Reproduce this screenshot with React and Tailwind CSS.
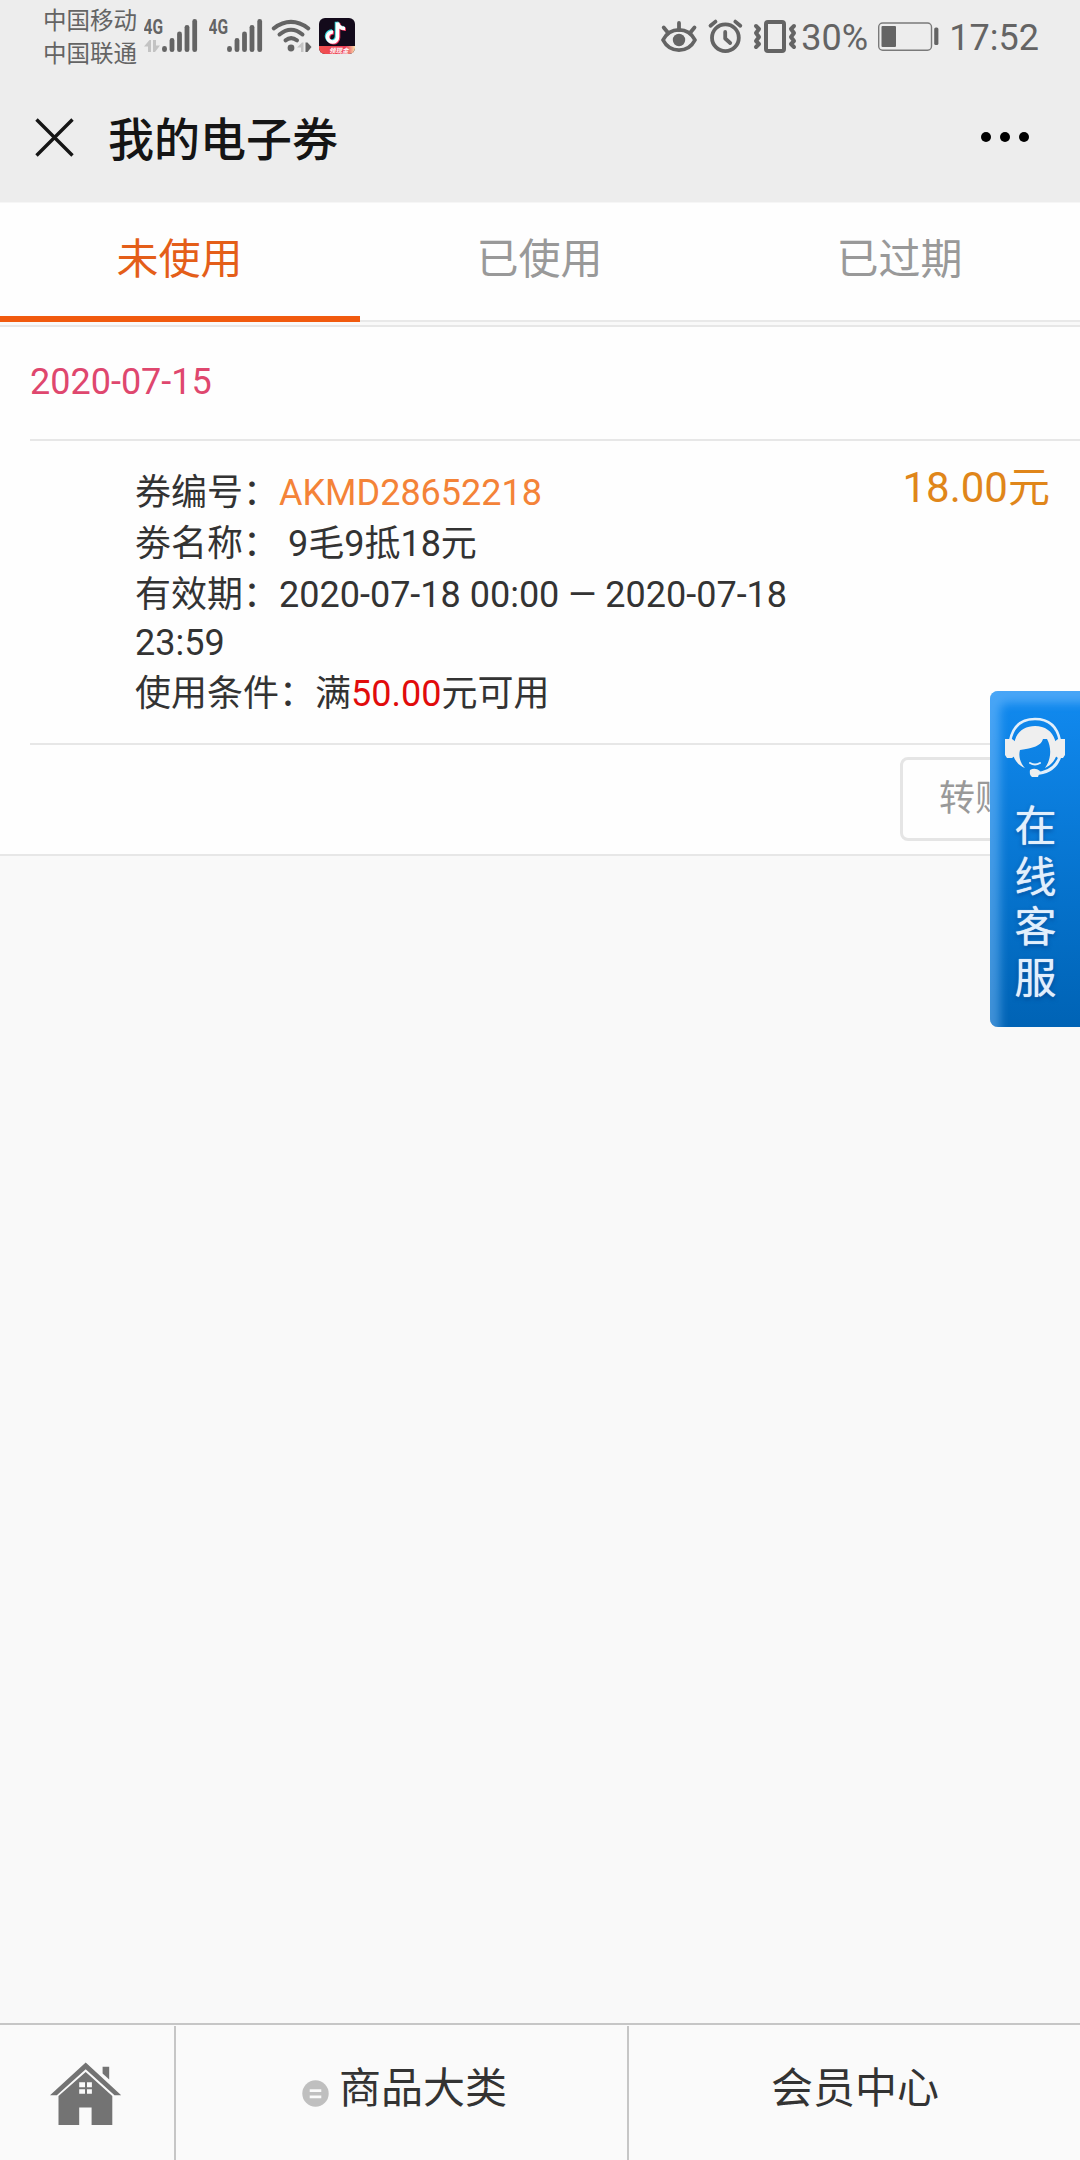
const SignalIcon = ({ arrows }) => {
  return (
    <svg className="h-[38px] w-[54px]" viewBox="144 16 54 38">
      <text x="143.5" y="34" fontSize="21" fontWeight="700" textLength="19.5" lengthAdjust="spacingAndGlyphs" fill="#646464">
        4G
      </text>
      {arrows && (
        <g fill="#c3c3c3">
          <path d="M144 46.5 L149.5 40 H151 V52 H148 V46.5 Z" />
          <path d="M160 45.5 L155 52 H153 V40 H156 V45.5 Z" />
        </g>
      )}
      <g stroke="#646464" strokeWidth="4.8" strokeLinecap="round">
        <path d="M164.5 48.3 V49.7" />
        <path d="M172 40.5 V49.7" />
        <path d="M179.5 34 V49.7" />
        <path d="M187 27.3 V49.7" />
        <path d="M194.7 21.5 V49.7" />
      </g>
    </svg>
  );
};

const WifiIcon = () => {
  return (
    <svg className="h-[38px] w-[41px]" viewBox="271 16 41 38">
      <g fill="none" stroke="#646464" strokeWidth="4" strokeLinecap="round">
        <path d="M273.8 28.3 Q291 15.5 308.2 28.3" />
        <path d="M279.5 34.5 Q291 25 302.5 34.5" />
        <path d="M285.5 40.3 Q291 36 297 40.3" />
      </g>
      <circle cx="291" cy="48" r="3.4" fill="#646464" />
      <path d="M297 47.5 L302 42.5 H303.5 V52 H301 V47.5 Z" fill="#c3c3c3" />
      <path d="M305.5 42.5 H307.5 L311.5 47 L307.5 52 H305.5 Z" fill="#646464" />
    </svg>
  );
};

const TiktokIcon = () => {
  const note = 'M17.5 5 V19.5 A5 5 0 1 1 13 14.5 M17.5 5 C18 9 21 11 25 11';
  return (
    <svg className="h-9 w-9" viewBox="0 0 36 36">
      <defs>
        <clipPath id="app-shape">
          <rect width="36" height="36" rx="6" />
        </clipPath>
        <linearGradient id="app-banner" x1="0" x2="1">
          <stop offset="0" stopColor="#f2524f" />
          <stop offset="0.75" stopColor="#ea3d57" />
          <stop offset="1" stopColor="#fbe3ae" />
        </linearGradient>
      </defs>
      <g clipPath="url(#app-shape)">
        <rect width="36" height="36" fill="#130a1b" />
        <g fill="none" strokeWidth="3.6" transform="translate(1 -.5)">
          <path d={note} stroke="#35d6dc" transform="translate(-1 -.8)" />
          <path d={note} stroke="#f0305a" transform="translate(1 .8)" />
          <path d={note} stroke="#fff" />
        </g>
        <rect y="28" width="36" height="8" fill="url(#app-banner)" />
        <text x="10" y="34.6" fontSize="6.5" fontWeight="700" fontStyle="italic" fill="#fff">
          领现金
        </text>
      </g>
    </svg>
  );
};

const EyeIcon = () => {
  return (
    <svg className="h-[38px] w-[38px]" viewBox="660 16 38 38">
      <g fill="none" stroke="#646464" strokeWidth="3.8" strokeLinecap="round" strokeLinejoin="round">
        <path d="M663 40 C670 26.5 688 26.5 695 40 C688 53.5 670 53.5 663 40 Z" />
        <path d="M679 23 V30 M663.7 27.5 L668 32.8 M694.5 27.5 L690.2 32.8" />
      </g>
      <circle cx="679" cy="40" r="6.2" fill="#646464" />
    </svg>
  );
};

const AlarmIcon = () => {
  return (
    <svg className="h-[38px] w-[36px]" viewBox="707 16 36 38">
      <g fill="none" stroke="#646464" strokeWidth="3.8" strokeLinecap="round" strokeLinejoin="round">
        <circle cx="725.4" cy="37.7" r="13.4" />
        <path d="M725.2 32 V38.5 L730.2 43" />
        <path d="M710.5 25.8 L715.5 21.6 M740.3 25.8 L735.3 21.6" />
      </g>
    </svg>
  );
};

const VibrateIcon = () => {
  return (
    <svg className="h-[38px] w-[44px]" viewBox="753 16 44 38">
      <g fill="none" stroke="#646464" strokeWidth="4" strokeLinecap="round" strokeLinejoin="round">
        <rect x="766" y="22" width="18" height="29" rx="2" />
        <path d="M756 26 L759 29 L756 33 L759 37 L756 41 L759 44 L756 47" />
        <path d="M794 26 L791 29 L794 33 L791 37 L794 41 L791 44 L794 47" />
      </g>
    </svg>
  );
};

const BatteryIcon = () => {
  return (
    <svg className="h-[38px] w-[62px]" viewBox="877 16 62 38">
      <rect x="878.7" y="23" width="52.8" height="27.2" rx="4" fill="none" stroke="#7a7a7a" strokeWidth="1.4" />
      <rect x="881.5" y="26" width="14.5" height="21" rx="1" fill="#646464" />
      <rect x="934.2" y="27.5" width="4.2" height="17.5" rx="1.6" fill="#646464" />
    </svg>
  );
};

const StatusBar = () => {
  return (
    <div className="flex h-[72px] items-start justify-between pl-[43px] pr-[41px] text-[#646464]">
      <div className="flex">
        <div className="w-[101px] pt-[5px] text-[23.5px] leading-[33px]">
          <p>中国移动</p>
          <p>中国联通</p>
        </div>
        <div className="flex pt-4">
          <SignalIcon arrows />
          <div className="ml-[11px] mr-[8px]">
            <SignalIcon />
          </div>
          <WifiIcon />
          <div className="ml-[7px] pt-0.5">
            <TiktokIcon />
          </div>
        </div>
      </div>
      <div className="flex pt-4 text-[36px] leading-[44px]">
        <EyeIcon />
        <div className="ml-[9px] mr-[10px]">
          <AlarmIcon />
        </div>
        <VibrateIcon />
        <span className="ml-[4px] w-[76px]">30%</span>
        <BatteryIcon />
        <span className="ml-[10px]">17:52</span>
      </div>
    </div>
  );
};

const TitleBar = () => {
  return (
    <div className="flex h-[130px] items-center pl-[35px] pr-[51px]">
      <svg className="h-[39px] w-[39px]" viewBox="0 0 39 39">
        <path d="M1.5 1.5 L37.5 37.5 M37.5 1.5 L1.5 37.5" stroke="#151515" strokeWidth="3.4" />
      </svg>
      <h1 className="ml-[34px] flex-1 pt-[6px] text-[46px] font-medium leading-[60px] text-[#151515]">我的电子券</h1>
      <div className="flex gap-[9px]">
        <span className="h-2.5 w-2.5 rounded-full bg-black" />
        <span className="h-2.5 w-2.5 rounded-full bg-black" />
        <span className="h-2.5 w-2.5 rounded-full bg-black" />
      </div>
    </div>
  );
};

const tabs = ['未使用', '已使用', '已过期'];

const Tabs = ({ active }) => {
  return (
    <div className="flex h-[120px] border-t border-[#f6f6f6] bg-[#fefefe] text-[42px] leading-[110px]">
      {tabs.map((tab, index) => (
        <button
          key={tab}
          className={
            index === active
              ? 'flex-1 border-b-6 border-[#f15a0e] pr-px text-[#e45e19]'
              : 'flex-1 border-b-2 border-[#e9e9e9] pb-1 pr-px text-[#999]'
          }>
          {tab}
        </button>
      ))}
    </div>
  );
};

const Coupon = ({ coupon }) => {
  return (
    <div className="mt-[3px] border-y-2 border-[#e7e7e7] bg-[#fefefe] pl-[30px]">
      <div className="h-[112px] pt-[25px] text-[36px] leading-[60px] text-[#df476e]">{coupon.date}</div>
      <div className="flex h-[306px] justify-between border-y-2 border-[#e7e7e7] pl-[105px] pr-[30px]">
        <div className="w-[680px] pt-[27px] text-[36px] leading-[51px] text-[#333]">
          <p>
            券编号：<span className="text-[#f48338]">{coupon.code}</span>
          </p>
          <p>劵名称：&nbsp;{coupon.name}</p>
          <p>有效期：{coupon.from} — {coupon.toDate}</p>
          <p className="mb-[3px] leading-[45px]">{coupon.toTime}</p>
          <p>
            使用条件：满<span className="text-[#e10b0b]">{coupon.min}</span>元可用
          </p>
        </div>
        <div className="pt-[17px] text-[42px] leading-[60px] text-[#e0861a]">{coupon.price}元</div>
      </div>
      <div className="flex h-[109px] justify-end pr-[30px] pt-[12px]">
        <button className="h-[84px] w-[150px] rounded-lg border-3 border-[#e5e5e5] text-[36px] text-[#999]">转赠</button>
      </div>
    </div>
  );
};

const ServiceTab = () => {
  return (
    <aside className="absolute right-0 top-[691px] flex h-[336px] w-[90px] flex-col items-center overflow-hidden rounded-l-lg bg-linear-to-b from-[#118af0] to-[#0063b5] pt-[26px] shadow-[inset_10px_12px_10px_rgba(140,200,255,0.45)]">
      <svg className="h-[62px] w-[62px]" viewBox="0 0 62 62">
        <g fill="none" stroke="#e2effb" strokeLinecap="round">
          <path d="M6 24 C9 8 19 2 31 2 C43 2 53 8 56 24" strokeWidth="2.6" />
          <path d="M57 36 C54 49 45 56 31 56.5" strokeWidth="3" />
          <path d="M26 46 Q31 49 36 46" strokeWidth="2" />
        </g>
        <path
          d="M11 23 C14 13 22 9 31 9 C41 9 48 14 51 23 L53 36 C52 43 47 48 41 51 C47 43 48 31 43 22 H39 C37 29 29 31 16 33 C14 40 17 47 21 51 C15 49 10 43 9 37 Z"
          fill="#efefef"
        />
        <path d="M1 22 H8 L12 25 V38 L8 41 H3 L1 38 Z M61 22 H54 L50 25 V38 L54 41 H59 L61 38 Z" fill="#efefef" />
        <path d="M26 53 Q31 50 36 54 L34 60 H28 Q25 58 26 53 Z" fill="#efefef" />
      </svg>
      <div className="mt-[23px] flex flex-col pl-px text-[42px] leading-[50.5px] text-[#e2effc] [text-shadow:0_0_1px_#cfe5fa,0_2px_4px_rgba(0,50,120,0.6)]">
        <span>在</span>
        <span>线</span>
        <span>客</span>
        <span>服</span>
      </div>
    </aside>
  );
};

const HomeIcon = () => {
  return (
    <svg className="h-[64px] w-[72px]" viewBox="50 64 72 66" preserveAspectRatio="none">
      <g fill="#737373">
        <path d="M50 98.2 L85.7 64.4 L121.2 98.2 H114.5 L85.7 71.4 L56.8 98.2 Z" />
        <path d="M102.6 69 H109.2 V82 L102.6 75.8 Z" />
        <path d="M85.7 74.4 L112.3 99 V129 H91.6 V111 H79.2 V129 H58.5 V99 Z" />
      </g>
      <path d="M79.2 85 H85 V90 H79.2 Z M87 85 H91.9 V90 H87 Z M79.2 92 H85 V96.8 H79.2 Z M87 92 H91.9 V96.8 H87 Z" fill="#fafafa" />
    </svg>
  );
};

const BottomNav = () => {
  return (
    <nav className="flex h-[137px] border-t-2 border-[#c6c6c6] bg-[#fafafa] pt-px text-[42px] text-[#333]">
      <a className="flex w-[176px] justify-center border-r-2 border-[#c6c6c6] pr-[2px] pt-[36px]">
        <HomeIcon />
      </a>
      <a className="flex w-[453px] justify-center border-r-2 border-[#c6c6c6] pl-[6px] leading-[126px]">
        <svg className="mr-[10px] mt-[54px] h-[27px] w-[27px]" viewBox="0 0 28 28">
          <circle cx="14" cy="14" r="13.7" fill="#bfbfbf" />
          <path d="M8 11 H20 M8 17.5 H20" stroke="#fafafa" strokeWidth="3" />
        </svg>
        商品大类
      </a>
      <a className="flex flex-1 justify-center pl-px leading-[126px]">会员中心</a>
    </nav>
  );
};

const coupon = {
  date: '2020-07-15',
  code: 'AKMD28652218',
  name: '9毛9抵18元',
  from: '2020-07-18 00:00',
  toDate: '2020-07-18',
  toTime: '23:59',
  min: '50.00',
  price: '18.00'
};

const App = () => {
  return (
    <div
      lang="zh-CN"
      className='relative flex h-[2160px] w-[1080px] flex-col overflow-hidden bg-[#f9f9f9] font-["Roboto","Noto_Sans_CJK_SC",sans-serif]'>
      <header className="bg-[#ededed]">
        <StatusBar />
        <TitleBar />
      </header>
      <Tabs active={0} />
      <main className="flex-1">
        <Coupon coupon={coupon} />
      </main>
      <BottomNav />
      <ServiceTab />
    </div>
  );
};

export default App;
